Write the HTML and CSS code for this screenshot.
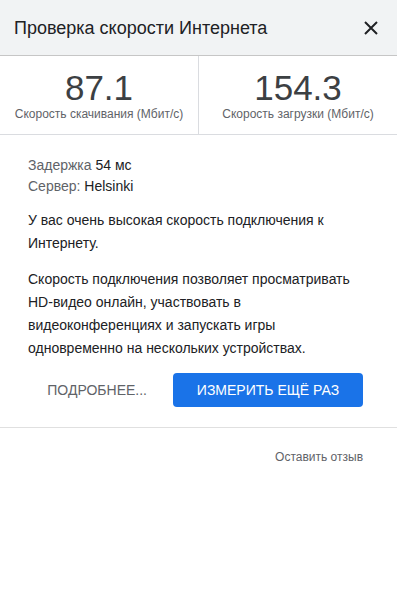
FILE: index.html
```html
<!DOCTYPE html>
<html lang="ru">
<head>
<meta charset="utf-8">
<link rel="stylesheet" href="styles.css">
</head>
<body>
<div class="panel">
  <header class="head">
    <h1 class="title">Проверка скорости Интернета</h1>
    <button class="close" aria-label="Закрыть">
      <svg width="14" height="14" viewBox="0 0 14 14"><path d="M1 1L13 13M13 1L1 13" stroke="#202124" stroke-width="2" fill="none"/></svg>
    </button>
  </header>
  <section class="stats">
    <div class="stat">
      <div class="num">87.1</div>
      <div class="lbl">Скорость скачивания (Мбит/с)</div>
    </div>
    <div class="stat">
      <div class="num">154.3</div>
      <div class="lbl">Скорость загрузки (Мбит/с)</div>
    </div>
  </section>
  <section class="body">
    <div class="meta">
      <div><span class="key">Задержка</span> <span class="val">54 мс</span></div>
      <div><span class="key">Сервер:</span> <span class="val">Helsinki</span></div>
    </div>
    <p class="text first">У вас очень высокая скорость подключения к Интернету.</p>
    <p class="text">Скорость подключения позволяет просматривать HD-видео онлайн, участвовать в видеоконференциях и запускать игры одновременно на нескольких устройствах.</p>
    <div class="actions">
      <button class="more">ПОДРОБНЕЕ...</button>
      <button class="again">ИЗМЕРИТЬ ЕЩЁ РАЗ</button>
    </div>
  </section>
  <footer class="foot">
    <a class="feedback">Оставить отзыв</a>
  </footer>
</div>
</body>
</html>
```
FILE: styles.css
```css
* { box-sizing: border-box; }
html, body { margin: 0; padding: 0; background: #fff; }
body { font-family: "Liberation Sans", Arial, sans-serif; color: #202124; }
.panel { width: 397px; }
.head {
  height: 56px;
  background: #f1f3f4;
  border-bottom: 1px solid #c6c6c6;
  display: flex;
  align-items: center;
  justify-content: space-between;
  padding: 0 19px 0 14px;
}
.title { margin: 0; font-size: 18px; font-weight: normal; color: #202124; padding-top: 2px; }
.close { border: 0; background: none; padding: 0; width: 14px; height: 14px; display: flex; }
.stats {
  display: grid;
  grid-template-columns: 198px 1fr;
  border-bottom: 1px solid #dadce0;
  height: 79px;
}
.stat {
  display: flex;
  flex-direction: column;
  align-items: center;
  padding-top: 13px;
}
.stat + .stat { border-left: 1px solid #dadce0; }
.num { font-size: 35px; line-height: 37px; color: #3c4043; }
.lbl { font-size: 12px; line-height: 16px; color: #5f6368; }
.body { padding: 20px 34px 20px 28px; border-bottom: 1px solid #e0e0e0; }
.meta { font-size: 14px; line-height: 21px; }
.key { color: #5f6368; }
.val { color: #202124; }
.text { margin: 13px 0 0; font-size: 14px; line-height: 23px; color: #202124; }
.text.first { margin-top: 12px; }
.actions {
  margin-top: 13px;
  display: flex;
  align-items: center;
  justify-content: flex-end;
  gap: 26px;
}
.more {
  border: 0; background: none; padding: 0;
  font-family: inherit; font-size: 14px; color: #5f6368;
}
.again {
  border: 0;
  background: #1a73e8;
  color: #fff;
  font-family: inherit;
  font-size: 14px;
  width: 190px;
  height: 34px;
  border-radius: 4px;
}
.foot { display: flex; justify-content: flex-end; padding: 22px 34px; }
.feedback { font-size: 12px; color: #5f6368; }
```
